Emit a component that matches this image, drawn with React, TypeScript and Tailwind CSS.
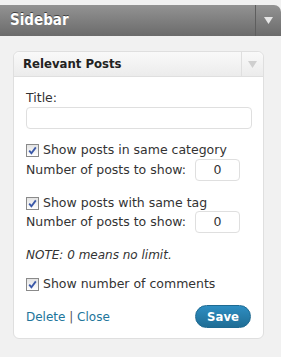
import React from "react";

function Check() {
  return (
    <span className="inline-flex items-center justify-center w-[13px] h-[13px] border border-[#8a8a8a] bg-gradient-to-b from-[#e4e4e4] to-[#ffffff] shrink-0">
      <svg width="9" height="9" viewBox="0 0 9 9">
        <path d="M1.2 4.6 L3.4 7.2 L7.8 1.4" fill="none" stroke="#3a58a8" strokeWidth="1.8" />
      </svg>
    </span>
  );
}

const cond = { fontFamily: '"DejaVu Sans Condensed", "DejaVu Sans", sans-serif' };

export default function App() {
  const font = { fontFamily: '"DejaVu Sans", Verdana, sans-serif' };
  return (
    <div className="w-[281px] h-[357px] bg-[#f1f1f1] pt-[5px]" style={font}>
      <div className="h-[31px] rounded-tr-[7px] bg-gradient-to-b from-[#939393] to-[#6b6b6b] flex items-stretch">
        <div
          className="flex-1 flex items-center pl-[10px] text-white font-bold text-[15px] [text-shadow:0_-1px_0_#3f3f3f]"
          style={cond}
        >
          Sidebar
        </div>
        <div className="w-[26px] border-l border-[#5e5e5e] flex items-center justify-center">
          <svg width="9" height="7" viewBox="0 0 9 7">
            <path d="M0 0 H9 L4.5 7 Z" fill="#e6e6e6" />
          </svg>
        </div>
      </div>
      <div className="mt-[15px] ml-[13px] w-[251px] rounded-[6px] border border-[#dfdfdf] bg-white">
        <div className="h-[25px] rounded-t-[6px] bg-gradient-to-b from-[#f9f9f9] to-[#ececec] border-b border-[#dfdfdf] flex items-stretch">
          <div className="flex-1 flex items-center pl-[9px] text-[13px] font-bold text-[#222]" style={cond}>
            Relevant Posts
          </div>
          <div className="w-[22px] border-l border-[#dfdfdf] flex items-center justify-center">
            <svg width="9" height="7" viewBox="0 0 9 7">
              <path d="M0 0 H9 L4.5 7 Z" fill="#cfcfcf" />
            </svg>
          </div>
        </div>
        <div className="pl-[12px] pr-[11px] pt-[13px] pb-[10px] text-[12.5px] text-[#333]">
          <div className="h-[16px] leading-[16px]">Title:</div>
          <div className="mt-[1px] h-[22px] border border-[#dfdfdf] rounded-[4px] bg-white" />
          <div className="mt-[13px] h-[16px] flex items-center gap-[4px]">
            <Check />
            <span>Show posts in same category</span>
          </div>
          <div className="mt-[1px] h-[22px] flex items-center">
            <span className="w-[169px] shrink-0 whitespace-nowrap">Number of posts to show:</span>
            <div className="w-[45px] h-[22px] border border-[#dfdfdf] rounded-[4px] flex items-center justify-center">0</div>
          </div>
          <div className="mt-[14px] h-[16px] flex items-center gap-[4px]">
            <Check />
            <span>Show posts with same tag</span>
          </div>
          <div className="h-[22px] flex items-center">
            <span className="w-[169px] shrink-0 whitespace-nowrap">Number of posts to show:</span>
            <div className="w-[45px] h-[22px] border border-[#dfdfdf] rounded-[4px] flex items-center justify-center">0</div>
          </div>
          <div className="mt-[14px] h-[16px] leading-[16px] italic text-[12px]">NOTE: 0 means no limit.</div>
          <div className="mt-[13px] h-[16px] flex items-center gap-[4px]">
            <Check />
            <span>Show number of comments</span>
          </div>
          <div className="mt-[13px] h-[23px] flex items-center justify-between">
            <div className="text-[12px]">
              <a className="text-[#21759b]">Delete</a>
              <span className="text-[#555]"> | </span>
              <a className="text-[#21759b]">Close</a>
            </div>
            <div
              className="mr-[1px] w-[56px] h-[23px] rounded-full bg-gradient-to-b from-[#2e8ec2] to-[#1f6d95] border border-[#1e6a92] text-white font-bold text-[13px] flex items-center justify-center"
              style={cond}
            >
              Save
            </div>
          </div>
        </div>
      </div>
    </div>
  );
}
